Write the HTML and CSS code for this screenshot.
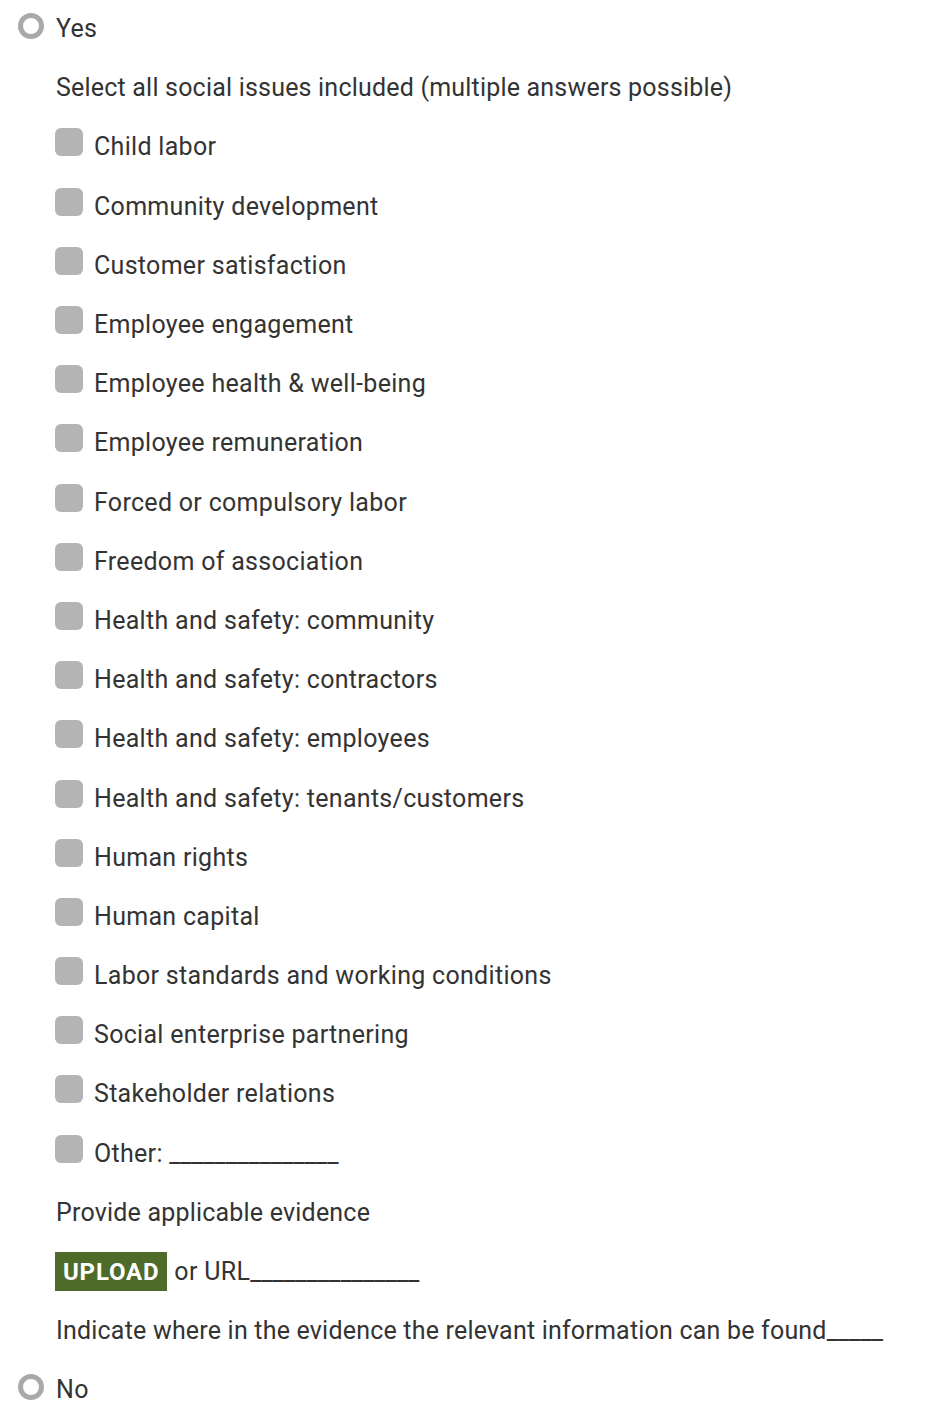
FILE: index.html
```html
<!DOCTYPE html>
<html lang="en">
<head>
<meta charset="utf-8">
<link rel="stylesheet" href="styles.css">
<title>Social issues</title>
</head>
<body>
<div class="form">
  <label class="row radio-row"><span class="radio"></span><span class="txt">Yes</span></label>
  <div class="sub">
    <div class="row plain">Select all social issues included (multiple answers possible)</div>
    <label class="row check-row"><span class="box"></span><span class="txt">Child labor</span></label>
    <label class="row check-row"><span class="box"></span><span class="txt">Community development</span></label>
    <label class="row check-row"><span class="box"></span><span class="txt">Customer satisfaction</span></label>
    <label class="row check-row"><span class="box"></span><span class="txt">Employee engagement</span></label>
    <label class="row check-row"><span class="box"></span><span class="txt">Employee health &amp; well-being</span></label>
    <label class="row check-row"><span class="box"></span><span class="txt">Employee remuneration</span></label>
    <label class="row check-row"><span class="box"></span><span class="txt">Forced or compulsory labor</span></label>
    <label class="row check-row"><span class="box"></span><span class="txt">Freedom of association</span></label>
    <label class="row check-row"><span class="box"></span><span class="txt">Health and safety: community</span></label>
    <label class="row check-row"><span class="box"></span><span class="txt">Health and safety: contractors</span></label>
    <label class="row check-row"><span class="box"></span><span class="txt">Health and safety: employees</span></label>
    <label class="row check-row"><span class="box"></span><span class="txt">Health and safety: tenants/customers</span></label>
    <label class="row check-row"><span class="box"></span><span class="txt">Human rights</span></label>
    <label class="row check-row"><span class="box"></span><span class="txt">Human capital</span></label>
    <label class="row check-row"><span class="box"></span><span class="txt">Labor standards and working conditions</span></label>
    <label class="row check-row"><span class="box"></span><span class="txt">Social enterprise partnering</span></label>
    <label class="row check-row"><span class="box"></span><span class="txt">Stakeholder relations</span></label>
    <label class="row check-row"><span class="box"></span><span class="txt">Other: <span class="blank">_______________</span></span></label>
    <div class="row plain">Provide applicable evidence</div>
    <div class="row"><span class="upload">UPLOAD</span><span class="txt">or URL<span class="blank">_______________</span></span></div>
    <div class="row plain"><span class="txt">Indicate where in the evidence the relevant information can be found<span class="blank">_____</span></span></div>
  </div>
  <label class="row radio-row"><span class="radio"></span><span class="txt">No</span></label>
</div>
</body>
</html>
```
FILE: styles.css
```css
html, body {
  margin: 0;
  padding: 0;
  background: #ffffff;
}
body {
  font-family: "Roboto", "Liberation Sans", sans-serif;
  font-size: 25px;
  letter-spacing: 0.3px;
  color: #333333;
}
.form {
  margin-top: -1px;
  padding-left: 18px;
}
.sub {
  padding-left: 37px;
}
.row {
  display: flex;
  align-items: center;
  height: 59.2px;
  white-space: nowrap;
}
.plain {
  padding-left: 1px;
  letter-spacing: 0.2px;
}
.blank {
  letter-spacing: 0;
}
.radio {
  width: 26px;
  height: 26px;
  box-sizing: border-box;
  border: 5px solid #a9a9a9;
  border-radius: 50%;
  margin-right: 12px;
  margin-top: -6px;
}
.box {
  width: 28px;
  height: 28px;
  border-radius: 6px;
  background: #b4b4b5;
  margin-right: 11px;
  margin-top: -9px;
}
.upload {
  display: inline-flex;
  align-items: center;
  height: 39px;
  padding: 0 8px;
  background: #4e6b2a;
  color: #ffffff;
  font-weight: 700;
  font-size: 24px;
  letter-spacing: 0.8px;
  margin-right: 7px;
}
```
